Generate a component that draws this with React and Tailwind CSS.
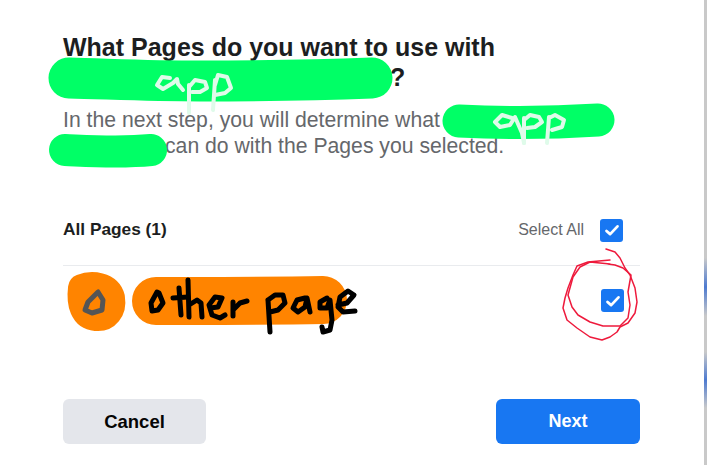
import React from 'react';

const Check = () => (
  <svg viewBox="0 0 24 24" className="w-[22px] h-[22px]" fill="none" stroke="white" strokeWidth="3" strokeLinecap="round" strokeLinejoin="round">
    <path d="M6 13l4 3.5L18 8" />
  </svg>
);

const Checkbox = () => (
  <div className="w-[23px] h-[23px] rounded-[3px] bg-[#1877f2] flex items-center justify-center">
    <Check />
  </div>
);

// marker scribbles drawn over the page
const Scribbles = () => (
  <svg className="absolute left-0 top-0 pointer-events-none" width="707" height="465" viewBox="0 0 707 465" fill="none" strokeLinecap="round" strokeLinejoin="round">
    {/* green over the app name */}
    <g stroke="#00ff66">
      <path d="M69 78 C110 79 150 81 200 81 C260 81 320 80 372 78" strokeWidth="41" />
      <path d="M65 150 C90 151 120 153 151 150" strokeWidth="32" />
      <path d="M459 121 C500 123 550 123 598 120" strokeWidth="33" />
    </g>
    <g stroke="#dffbea" strokeWidth="4">
      <path d="M170 78 L162 77 L157 85 L163 89 L173 83 L177 79 L178 84 L183 90" />
      <path d="M189 85 L189 113 M189 87 L195 80 L205 82 L207 88 L200 92 L192 92" />
      <path d="M215 80 L213 110 M215 85 L218 75 L227 77 L231 88 L225 93 L215 95" />
      <path d="M512 118 L502 115 L495 122 L500 127 L510 125 L515 117 L522 133 L524 143" />
      <path d="M524 118 L524 143 M524 120 L530 115 L539 117 L542 122 L535 127 L527 128" />
      <path d="M549 117 L547 143 M549 118 L555 115 L564 120 L562 127 L552 130" />
    </g>
    {/* orange over the page row */}
    <path d="M82 288 C92 284 108 286 111 298 C113 310 106 318 96 317 C84 316 80 304 82 288Z" fill="#ff8400" stroke="#ff8400" strokeWidth="28" />
    <path d="M156 301 C200 301 270 301 323 300" stroke="#ff8400" strokeWidth="48" />
    <path d="M98 292 L88 302 L85 310 L92 313 L102 310 L103 300Z" stroke="#555" strokeWidth="5" />
    <g stroke="#000" strokeWidth="5">
      <path d="M157 292 L151 303 L152 311 L158 310 L163 303 L159 293Z" />
      <path d="M179 288 L181 315 M173 298 L188 297" />
      <path d="M188 280 L189 317 M189 305 L197 300 L201 303 L202 317" />
      <path d="M210 308 L218 307 L222 298 L215 297 L209 305 L212 315 L220 318 L225 315" />
      <path d="M233 302 L233 316 M233 310 L240 303 L247 301" />
      <path d="M268 300 L270 332 M268 300 L275 295 L283 295 L285 303 L278 310 L270 312" />
      <path d="M305 298 L297 300 L293 308 L298 312 L305 307 L307 298 L310 312" />
      <path d="M327 298 L320 302 L320 308 L327 308 L330 300 L332 320 L330 330 L323 332 L322 327" />
      <path d="M338 305 L347 303 L354 295 L348 291 L340 297 L338 307 L343 312 L355 311" />
    </g>
    {/* red circle round the checkbox */}
    <g stroke="#ee1a3c" strokeWidth="1.5">
      <path d="M606 249 L615 252 L620 258 L625 268 L630 275 L635 288 L637 302 L635 313 L628 323 L620 327 L617 332 L610 337 L602 340 L590 337 L577 328 L567 320 L563 308 L565 298 L568 288 L573 275 L577 266 L588 262 L610 260" />
      <path d="M610 264 L590 262 L580 267 L573 277 L568 295 L572 307 L578 315 L590 322 L603 326 L620 326 L628 318 L630 305 L628 292 L631 275 L623 268 L615 265 L608 264" />
    </g>
  </svg>
);

export default function App() {
  return (
    <div className="relative w-[707px] h-[465px] bg-white overflow-hidden font-['Liberation_Sans',sans-serif]">
      <div className="flex flex-col pl-[63px] pr-[67px] pt-[32px]">
        <h1 className="text-[25px] leading-[30px] font-bold text-[#1c1e21]">
          What Pages do you want to use with
          <br />
          <span className="inline-block w-[327px]"></span>?
        </h1>
        <p className="mt-[15px] text-[21.2px] leading-[26px] text-[#65676b] whitespace-nowrap">
          In the next step, you will determine what
          <br />
          <span className="inline-block w-[102px]"></span>can do with the Pages you selected.
        </p>

        <div className="mt-[59px] flex items-center justify-between h-[24px] pr-[17px]">
          <span className="text-[17.3px] font-bold text-[#1c1e21]">All Pages (1)</span>
          <div className="flex items-center gap-[16px]">
            <span className="text-[16px] text-[#65676b]">Select All</span>
            <Checkbox />
          </div>
        </div>

        <div className="mt-[23px] border-t border-[#e9ebee] h-[114px] flex justify-end pr-[16px] pt-[23px]">
          <Checkbox />
        </div>

        <div className="mt-[20px] flex justify-between">
          <button className="w-[143px] h-[45px] rounded-[6px] bg-[#e4e6eb] text-[18.5px] font-bold text-[#050505]">Cancel</button>
          <button className="w-[144px] h-[45px] rounded-[6px] bg-[#1877f2] text-[18px] font-bold text-white">Next</button>
        </div>
      </div>
      {/* sliver of the window behind, at the right edge */}
      <div className="absolute right-0 top-0 w-[3px] h-full bg-[#c9c9c9]">
        <div className="absolute top-[258px] left-0 w-full h-[58px] bg-[linear-gradient(180deg,#c9c9c9,#4d7ad0_50%,#c9c9c9)]"></div>
        <div className="absolute top-[352px] left-0 w-full h-[56px] bg-[linear-gradient(180deg,#c9c9c9,#4d7ad0_50%,#c9c9c9)]"></div>
      </div>
      <Scribbles />
    </div>
  );
}
